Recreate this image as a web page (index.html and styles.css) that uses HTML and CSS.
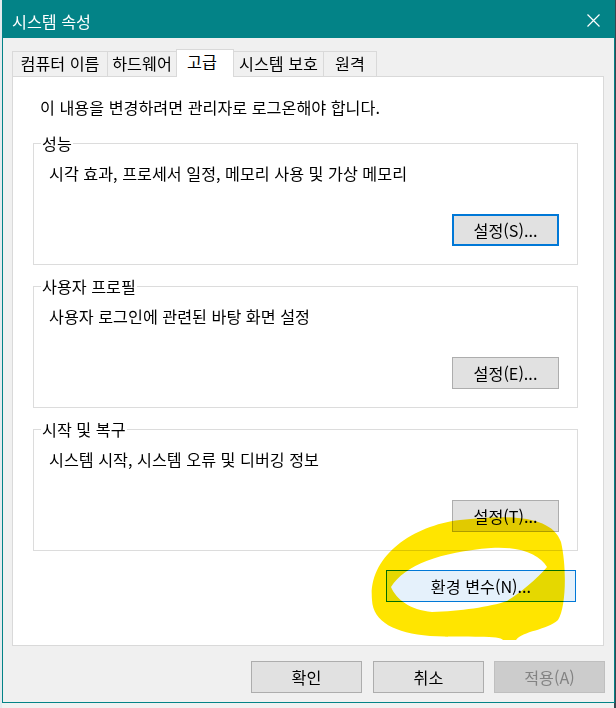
FILE: index.html
```html
<!DOCTYPE html>
<html lang="ko">
<head>
<meta charset="utf-8">
<title>시스템 속성</title>
<link rel="stylesheet" href="styles.css">
</head>
<body>
<div class="window">
  <div class="titlebar">
    <span class="title">시스템 속성</span>
    <svg class="close" width="13" height="13" viewBox="0 0 13 13"><path d="M0.5 0.5 L12.5 12.5 M12.5 0.5 L0.5 12.5" stroke="#ffffff" stroke-width="1.2" fill="none"/></svg>
  </div>
  <div class="client">
    <div class="tabs">
      <div class="tab t1">컴퓨터 이름</div>
      <div class="tab t2">하드웨어</div>
      <div class="tab t3 active">고급</div>
      <div class="tab t4">시스템 보호</div>
      <div class="tab t5">원격</div>
    </div>
    <div class="panel">
      <p class="intro">이 내용을 변경하려면 관리자로 로그온해야 합니다.</p>
      <div class="group">
        <span class="group-label">성능</span>
        <p class="desc">시각 효과, 프로세서 일정, 메모리 사용 및 가상 메모리</p>
        <button class="btn group-btn focus">설정(S)...</button>
      </div>
      <div class="group">
        <span class="group-label">사용자 프로필</span>
        <p class="desc">사용자 로그인에 관련된 바탕 화면 설정</p>
        <button class="btn group-btn">설정(E)...</button>
      </div>
      <div class="group">
        <span class="group-label">시작 및 복구</span>
        <p class="desc">시스템 시작, 시스템 오류 및 디버깅 정보</p>
        <button class="btn group-btn">설정(T)...</button>
      </div>
      <button class="btn env">환경 변수(N)...</button>
      <svg class="scribble" width="589" height="567" viewBox="13 77 589 567">
        <path fill="#ffe500" fill-rule="evenodd" d="M 372 600 C 368 558, 410 526, 460 520 C 510 514, 552 516, 561 542 C 567 568, 566 608, 558 620 C 548 630, 522 631, 516 640 L 503 640 C 500 635, 470 638, 430 636 C 395 633, 373 622, 372 600 Z M 391 587 C 405 565, 440 552, 491 548 C 520 546, 540 555, 547 567 C 536 580, 521 592, 507 601 C 490 607, 460 611, 432 612 C 410 610, 396 599, 391 587 Z"/>
      </svg>
    </div>
    <div class="actions">
      <button class="btn action">확인</button>
      <button class="btn action cancel">취소</button>
      <button class="btn action apply" disabled>적용(A)</button>
    </div>
  </div>
</div>
</body>
</html>
```

FILE: styles.css
```css
* { box-sizing: border-box; }

html, body {
  margin: 0;
  padding: 0;
}

body {
  width: 616px;
  height: 708px;
  overflow: hidden;
  background: linear-gradient(to right, #e4eaee 0 2px, #f1f1f1 2px 614px, #3b4650 614px);
  font-family: "Noto Sans CJK KR", "Noto Sans", sans-serif;
  font-size: 16.2px;
  color: #000;
}

.window {
  margin-left: 2px;
  width: 613px;
  height: 703px;
  border: 1px solid #038387;
  border-top: 0;
  background: #f0f0f0;
  display: flex;
  flex-direction: column;
}

.titlebar {
  height: 38px;
  background: #038387;
  color: #fff;
  display: flex;
  align-items: center;
  padding: 4px 14px 0 9px;
  justify-content: space-between;
}

.title {
  line-height: 20px;
}

.close {
  display: block;
  margin-top: -2px;
}

.client {
  flex: 1;
  display: flex;
  flex-direction: column;
  padding: 11px 0 9px 9px;
}

.tabs {
  display: flex;
  align-items: flex-end;
  height: 27px;
}

.tab {
  height: 25px;
  border: 1px solid #d9d9d9;
  border-bottom: 0;
  background: #f0f0f0;
  text-align: center;
  line-height: 23px;
  white-space: nowrap;
}

.tab + .tab { margin-left: -1px; }

.t1 { width: 96px; }
.t2 { width: 70px; }
.t3 { width: 58px; }
.t4 { width: 91px; }
.t5 { width: 54px; }

.tab.active {
  height: 28px;
  margin-bottom: -1px;
  background: #fff;
  position: relative;
  z-index: 1;
  line-height: 23px;
  padding-right: 6px;
}

.panel {
  position: relative;
  width: 592px;
  height: 570px;
  background: #fff;
  border: 1px solid #d9d9d9;
  padding: 20px 25px 0 20px;
  display: flex;
  flex-direction: column;
}

.intro {
  margin: 0 0 26px 7px;
  line-height: 20px;
}

.group {
  position: relative;
  height: 122px;
  border: 1px solid #dcdcdc;
  padding: 19px 18px 0 15px;
  display: flex;
  flex-direction: column;
  margin-bottom: 21px;
}

.group + .group + .group { margin-bottom: 19px; }

.group-label {
  position: absolute;
  top: -11px;
  left: 7px;
  padding: 0 1px;
  background: #fff;
  line-height: 20px;
}

.desc {
  margin: 0 0 31px 0;
  line-height: 20px;
}

.btn {
  font-family: inherit;
  font-size: 16.2px;
  color: #000;
  height: 32px;
  background: #e1e1e1;
  border: 1px solid #adadad;
  padding: 0;
  line-height: 28px;
  text-align: center;
}

.group-btn {
  align-self: flex-end;
  width: 107px;
}

.btn.focus {
  border: 2px solid #0078d7;
}

.env {
  align-self: flex-end;
  width: 190px;
  margin-right: 2px;
  background: #e5f1fb;
  border-color: #0078d7;
}

.scribble {
  position: absolute;
  left: 0;
  top: 0;
  pointer-events: none;
  mix-blend-mode: multiply;
}

.actions {
  display: flex;
  margin-top: 15px;
  padding-left: 239px;
}

.action {
  width: 111px;
}

.cancel { margin-left: 11px; }
.apply {
  margin-left: 10px;
  background: #cccccc;
  border-color: #bfbfbf;
  color: #838383;
}
```
